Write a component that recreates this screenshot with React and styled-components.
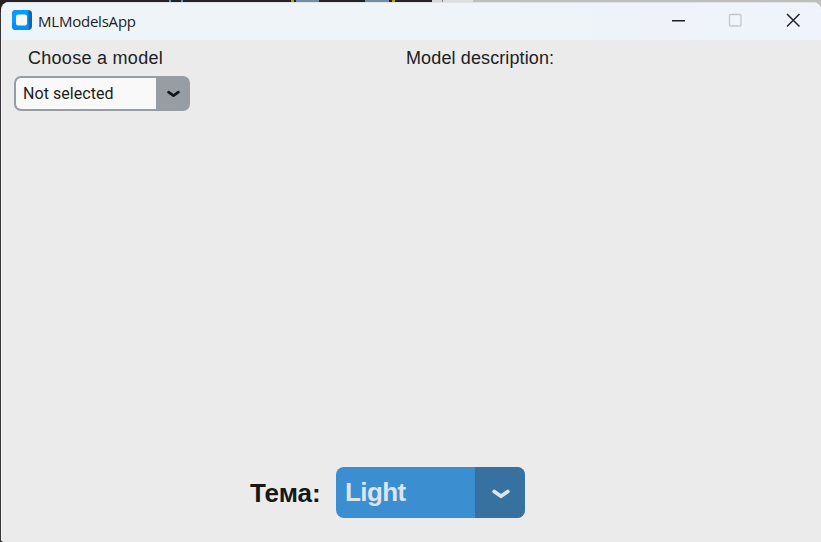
import React from "react";
import styled, { createGlobalStyle } from "styled-components";

const Global = createGlobalStyle`
  *{box-sizing:border-box}
  html,body{margin:0;padding:0;overflow:hidden;background:#242224}
`;
const Desktop = styled.div`
  width:821px;height:542px;display:flex;flex-direction:column;
  padding-left:1px;
  background:linear-gradient(90deg,#242224 0 432px,#d8d8d8 432px 442px,#888 442px 443px,#dedede 443px 473px,#bebebc 473px) 0 0/821px 12px no-repeat,#3a383b;
`;
const Backdrop = styled.div`height:2px;display:flex;margin-left:-1px;`;
const Fleck = styled.span`
  flex:none;height:2px;width:${p => p.$w}px;margin-left:${p => p.$gap}px;background:${p => p.$color};
`;
const Window = styled.main`
  height:540px;display:flex;flex-direction:column;
  background:#ebebeb;border-radius:8px 8px 0 3px;overflow:hidden;
  border-left:1px solid #f1f1f1;
`;
const TitleBar = styled.header`
  height:38px;flex:none;display:flex;align-items:center;margin-left:-1px;
  border-top:1px solid #dfe4e8;
  background:linear-gradient(90deg,#eff4f9,#eef4f8 60%,#f0f3fb);
`;
const AppIcon = styled.svg`width:22px;height:22px;margin:-3px 0 0 10px;flex:none;`;
const Title = styled.h1`
  margin:-1px 0 0 5px;font:400 15px/20px "Open Sans","Noto Sans",sans-serif;letter-spacing:-0.22px;color:#1c1d1f;
`;
const Controls = styled.div`margin-left:auto;display:flex;height:100%;`;
const ControlButton = styled.button`
  width:57px;height:37px;padding:0;border:0;background:none;color:${p => p.$color};
  svg{display:block}
`;
const Content = styled.section`flex:1;display:flex;flex-direction:column;justify-content:space-between;padding:0 0 24px 12px;`;
const Columns = styled.div`display:grid;grid-template-columns:392px 1fr;`;
const Field = styled.div`display:flex;flex-direction:column;align-items:flex-start;`;
const Label = styled.label`
  margin-left:${p => p.$indent || 0}px;height:36px;
  font:400 18px/36px "Liberation Sans",Arial,sans-serif;letter-spacing:${p => p.$track || 0}px;color:#202124;white-space:nowrap;
`;
const ModelSelect = styled.div`
  width:176px;height:35px;display:flex;border:2px solid #979da2;border-radius:7px;background:#979da2;overflow:hidden;
`;
const ModelValue = styled.div`
  width:140px;background:#f9f9fa;border-radius:4px 0 0 4px;padding-left:7px;
  font:400 16px/31px Roboto,sans-serif;letter-spacing:0.06px;color:#1c1d20;white-space:nowrap;
`;
const Arrow = styled.div`
  flex:1;display:grid;place-items:center;background:${p => p.$bg};padding:${p => p.$drop}px 0 0 2px;
  svg{display:block}
`;
const ThemeRow = styled.div`display:flex;align-items:center;margin-left:236px;`;
const ThemeLabel = styled.div`
  width:86px;font:700 26px/50px "Liberation Sans",Arial,sans-serif;color:#171717;white-space:nowrap;
`;
const ThemeSelect = styled.div`width:189px;height:51px;display:flex;border-radius:8px;background:#3b8ed0;overflow:hidden;`;
const ThemeValue = styled.div`
  width:139px;padding-left:9px;font:700 26px/51px "Liberation Sans",Arial,sans-serif;letter-spacing:-0.6px;color:#dce4ee;
`;

const Chevron = ({ w, h, color }) => (
  <svg width={w} height={h} viewBox="0 0 18 10" fill="none" stroke={color} strokeWidth="3.8" strokeLinecap="round" strokeLinejoin="round">
    <path d="M2.200 2.500 9 7.200 15.800 2.500" />
  </svg>
);

export default function App() {
  return (
    <>
      <Global />
      <Desktop>
        <Backdrop>
          <Fleck $gap={169} $w={2} $color="#4c9bc4" />
          <Fleck $gap={10} $w={2} $color="#4c9bc4" />
          <Fleck $gap={108} $w={3} $color="#b79a16" />
          <Fleck $gap={2} $w={23} $color="#6f8fa5" />
          <Fleck $gap={46} $w={24} $color="#6f8fa5" />
          <Fleck $gap={3} $w={3} $color="#b79a16" />
        </Backdrop>
        <Window>
          <TitleBar>
            <AppIcon viewBox="0 0 22 22">
              <rect x="1" y="1" width="20" height="20" rx="4" fill="#0864b5" />
              <path d="M5 1h12.500v20H5a4 4 0 0 1-4-4V5a4 4 0 0 1 4-4z" fill="#079aff" />
              <path d="M1 14h16.500v7H5a4 4 0 0 1-4-4z" fill="#078ff5" />
              <rect x="5" y="5.500" width="11" height="11" rx="2" fill="#f4f7fb" />
            </AppIcon>
            <Title>MLModelsApp</Title>
            <Controls>
              <ControlButton $color="#1e1f21" aria-label="Minimize">
                <svg width="57" height="37" fill="none" stroke="currentColor" strokeWidth="1.5"><path d="M22 17.700h13" /></svg>
              </ControlButton>
              <ControlButton $color="#c4c7cb" aria-label="Maximize" disabled>
                <svg width="57" height="37" fill="none" stroke="currentColor" strokeWidth="1.3"><rect x="22.500" y="11.500" width="11.500" height="11.500" rx="1.200" /></svg>
              </ControlButton>
              <ControlButton $color="#25262a" aria-label="Close">
                <svg width="57" height="37" fill="none" stroke="currentColor" strokeWidth="1.5"><path d="m23 11 12.500 12.500M35.500 11 23 23.500" /></svg>
              </ControlButton>
            </Controls>
          </TitleBar>
          <Content>
            <Columns>
              <Field>
                <Label $indent={14} $track={0.28}>Choose a model</Label>
                <ModelSelect>
                  <ModelValue>Not selected</ModelValue>
                  <Arrow $bg="#979da2" $drop={1}><Chevron w={13} h={8} color="#141518" /></Arrow>
                </ModelSelect>
              </Field>
              <Field>
                <Label $track={0.12}>Model description:</Label>
              </Field>
            </Columns>
            <ThemeRow>
              <ThemeLabel>Тема:</ThemeLabel>
              <ThemeSelect>
                <ThemeValue>Light</ThemeValue>
                <Arrow $bg="#36719f" $drop={2}><Chevron w={18} h={10} color="#dce4ee" /></Arrow>
              </ThemeSelect>
            </ThemeRow>
          </Content>
        </Window>
      </Desktop>
    </>
  );
}
